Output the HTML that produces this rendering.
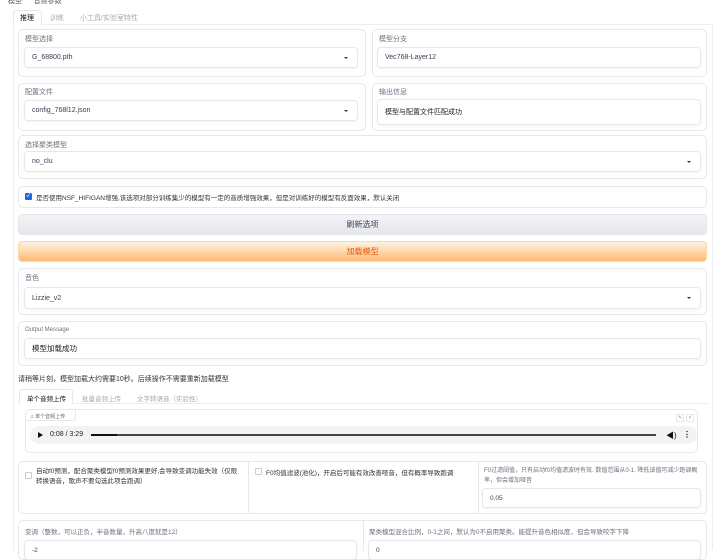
<!DOCTYPE html>
<html><head><meta charset="utf-8"><style>
*{box-sizing:border-box;margin:0;padding:0}
body{width:720px;height:550px;overflow:hidden;background:#fff;font-family:"Liberation Sans","Noto Sans CJK SC",sans-serif;color:#374151;position:relative}
.a{position:absolute}
.blk{position:absolute;border:1px solid #e5e7eb;border-radius:5px;background:#fff}
.lbl{position:absolute;font-size:7px;color:#6b7280}
.inp{position:absolute;border:1px solid #e5e7eb;border-radius:4px;background:#fff;font-size:7px;color:#374151;padding-left:7px;display:flex;align-items:center;box-shadow:0 1px 2px rgba(0,0,0,.05)}
.arr{position:absolute;right:9px;top:50%;margin-top:-1px;border-left:2px solid transparent;border-right:2px solid transparent;border-top:2px solid #333}
.t{position:absolute;font-size:7px}
</style></head><body>
<div class="t" style="left:8px;top:-4px;color:#555">模型 &nbsp;&nbsp;&nbsp;&nbsp; 音频参数</div>
<!-- top tabs -->
<div class="a" style="left:13px;top:24px;width:700px;height:526px;border:1px solid #eceef1;border-bottom:none"></div>
<div class="a" style="left:13px;top:10px;width:29px;height:15px;border:1px solid #e5e7eb;border-bottom:1px solid #fff;background:#fff;border-radius:3px 3px 0 0"></div>
<div class="t" style="left:20px;top:13px;color:#111">推理</div>
<div class="t" style="left:50px;top:13px;color:#aaa">训练</div>
<div class="t" style="left:80px;top:13px;color:#aaa">小工具/实验室特性</div>

<div class="blk" style="left:18px;top:29px;width:348px;height:48px"></div>
<div class="lbl" style="left:25px;top:34px">模型选择</div>
<div class="inp" style="left:24px;top:47px;width:334px;height:21px">G_68800.pth<span class="arr"></span></div>
<div class="blk" style="left:372px;top:29px;width:335px;height:48px"></div>
<div class="lbl" style="left:379px;top:34px">模型分支</div>
<div class="inp" style="left:377px;top:47px;width:324px;height:21px">Vec768-Layer12</div>

<div class="blk" style="left:18px;top:83px;width:348px;height:48px"></div>
<div class="lbl" style="left:25px;top:87px">配置文件</div>
<div class="inp" style="left:24px;top:100px;width:334px;height:21px">config_768l12.json<span class="arr"></span></div>
<div class="blk" style="left:372px;top:83px;width:335px;height:48px"></div>
<div class="lbl" style="left:379px;top:87px">输出信息</div>
<div class="inp" style="left:377px;top:99px;width:324px;height:26px;color:#222">模型与配置文件匹配成功</div>

<div class="blk" style="left:18px;top:135px;width:689px;height:44px"></div>
<div class="lbl" style="left:25px;top:140px">选择聚类模型</div>
<div class="inp" style="left:24px;top:151px;width:677px;height:21px">no_clu<span class="arr"></span></div>

<div class="blk" style="left:18px;top:186px;width:689px;height:22px"></div>
<div class="a" style="left:25px;top:193px;width:7px;height:7px;background:#2563eb;border-radius:1px;color:#fff;font-size:6px;line-height:7px;text-align:center">✓</div>
<div class="t" style="left:36px;top:192px;font-size:6.5px;color:#333">是否使用NSF_HIFIGAN增强,该选项对部分训练集少的模型有一定的音质增强效果，但是对训练好的模型有反面效果，默认关闭</div>

<div class="a" style="left:18px;top:214px;width:689px;height:21px;background:linear-gradient(#f3f4f6,#e5e7eb);border-radius:4px;border:1px solid #e5e7eb;font-size:8px;text-align:center;line-height:19px;color:#374151">刷新选项</div>
<div class="a" style="left:18px;top:241px;width:689px;height:21px;background:linear-gradient(#fff1e0,#fdba74);border-radius:4px;border:1px solid #fed7aa;font-size:8px;text-align:center;line-height:19px;color:#ea580c">加载模型</div>

<div class="blk" style="left:18px;top:268px;width:689px;height:47px"></div>
<div class="lbl" style="left:25px;top:273px">音色</div>
<div class="inp" style="left:24px;top:287px;width:677px;height:22px">Lizzie_v2<span class="arr"></span></div>

<div class="blk" style="left:18px;top:321px;width:689px;height:45px"></div>
<div class="lbl" style="left:25px;top:327px;font-size:6px">Output Message</div>
<div class="inp" style="left:24px;top:338px;width:677px;height:21px;font-size:7.5px;color:#222">模型加载成功</div>

<div class="t" style="left:18px;top:374px;color:#333">请稍等片刻，模型加载大约需要10秒。后续操作不需要重新加载模型</div>
<div class="a" style="left:18px;top:403px;width:690px;border-top:1px solid #eceef1"></div>
<div class="a" style="left:19px;top:389px;width:54px;height:15px;border:1px solid #e5e7eb;border-bottom:1px solid #fff;background:#fff;border-radius:3px 3px 0 0"></div>
<div class="t" style="left:27px;top:393px;color:#111;font-size:6.5px">单个音频上传</div>
<div class="t" style="left:82px;top:393px;color:#aaa;font-size:6.5px">批量音频上传</div>
<div class="t" style="left:137px;top:393px;color:#aaa;font-size:6.5px">文字转语音（实验性）</div>

<div class="blk" style="left:25px;top:409px;width:673px;height:44px"></div>
<div class="a" style="left:26px;top:410px;width:50px;height:11px;border-right:1px solid #e5e7eb;border-bottom:1px solid #e5e7eb;border-radius:0 0 3px 0;font-size:5px;color:#666;padding:3px 0 0 4px">♫ 单个音频上传</div>
<div class="a" style="left:676px;top:414px;width:8px;height:8px;border:1px solid #e5e7eb;font-size:5px;color:#999;text-align:center">✎</div>
<div class="a" style="left:686px;top:414px;width:8px;height:8px;border:1px solid #e5e7eb;font-size:5px;color:#999;text-align:center;line-height:7px">×</div>
<div class="a" style="left:30px;top:426px;width:667px;height:18px;background:#f1f3f4;border-radius:9px"></div>
<div class="a" style="left:38px;top:432px;border-left:5px solid #111;border-top:3px solid transparent;border-bottom:3px solid transparent"></div>
<div class="t" style="left:50px;top:431px;font-size:7px;color:#222">0:08 / 3:29</div>
<div class="a" style="left:91px;top:434px;width:565px;height:2px;background:#444"></div>
<div class="a" style="left:91px;top:434px;width:26px;height:2px;background:#111"></div>
<div class="t" style="left:666px;top:430px;font-size:8px;color:#111">◀)</div>
<div class="t" style="left:683px;top:430px;font-size:8px;color:#111;font-weight:bold">⋮</div>

<div class="blk" style="left:18px;top:461px;width:689px;height:53px"></div>
<div class="a" style="left:248px;top:462px;height:51px;border-left:1px solid #e5e7eb"></div>
<div class="a" style="left:478px;top:462px;height:51px;border-left:1px solid #e5e7eb"></div>
<div class="a" style="left:25px;top:472px;width:7px;height:7px;border:1px solid #ccc;border-radius:1px"></div>
<div class="t" style="left:36px;top:467px;width:205px;line-height:10px;font-size:6.5px;color:#333">自动f0预测，配合聚类模型f0预测效果更好,会导致变调功能失效（仅限转换语音，歌声不要勾选此项会跑调）</div>
<div class="a" style="left:255px;top:468px;width:7px;height:7px;border:1px solid #ccc;border-radius:1px"></div>
<div class="t" style="left:266px;top:467px;font-size:6.5px;color:#333;white-space:nowrap">F0均值滤波(池化)，开启后可能有效改善哑音，但有概率导致跑调</div>
<div class="t" style="left:484px;top:466px;width:218px;line-height:10px;font-size:6px;color:#6b7280">F0过滤阈值，只有启动f0均值滤波时有效. 数值范围从0-1. 降低该值可减少跑调概率，但会增加哑音</div>
<div class="inp" style="left:482px;top:488px;width:219px;height:20px;font-size:6.5px">0.05</div>

<div class="blk" style="left:18px;top:520px;width:689px;height:40px"></div>
<div class="a" style="left:363px;top:521px;height:30px;border-left:1px solid #e5e7eb"></div>
<div class="t" style="left:25px;top:526px;font-size:6.5px;color:#6b7280">变调（整数，可以正负，半音数量，升高八度就是12）</div>
<div class="inp" style="left:24px;top:540px;width:333px;height:20px;font-size:6.5px">-2</div>
<div class="t" style="left:369px;top:526px;font-size:6.5px;color:#6b7280">聚类模型混合比例，0-1之间，默认为0不启用聚类。能提升音色相似度，但会导致咬字下降</div>
<div class="inp" style="left:368px;top:540px;width:333px;height:20px;font-size:6.5px">0</div>
</body></html>
